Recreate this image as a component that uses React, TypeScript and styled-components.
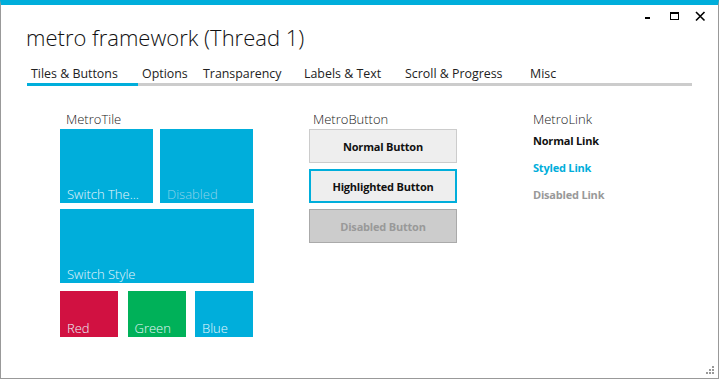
import styled, { createGlobalStyle } from 'styled-components';

const metroBlue = '#00aedb';

const GlobalStyle = createGlobalStyle`
	html, body {
		margin: 0;
		padding: 0;
		background: #ffffff;
	}

	body {
		font-family: 'Open Sans', 'Noto Sans', sans-serif;
		color: #111111;
	}
`;

const Window = styled.div`
	box-sizing: border-box;
	width: 719px;
	height: 379px;
	border: 1px solid #999999;
	border-top: 5px solid ${metroBlue};
	display: flex;
	flex-direction: column;
	position: relative;
	overflow: hidden;
`;

const TitleBar = styled.div`
	display: flex;
	justify-content: space-between;
	align-items: flex-start;
`;

const Title = styled.h1`
	margin: 16px 0 0 25px;
	font-size: 22px;
	font-weight: 300;
	line-height: 32px;
	color: #111111;
	letter-spacing: 0;
`;

const Controls = styled.div`
	display: flex;
	align-items: flex-start;
	gap: 15px;
	padding: 6px 12px 0 0;
`;

const ControlButton = styled.button`
	border: 0;
	background: none;
	padding: 0;
	width: 11px;
	height: 11px;
	display: flex;
	align-items: center;
	justify-content: center;
	cursor: pointer;
`;

const TabStrip = styled.div`
	display: flex;
	margin: 12px 0 0 26px;
	width: 665px;
	border-bottom: 3px solid #cccccc;
`;

const Tab = styled.div<{ $width: number; $active?: boolean }>`
	box-sizing: border-box;
	width: ${(props) => props.$width}px;
	padding: 0 0 0 4px;
	font-size: 12.4px;
	line-height: 18px;
	color: #222222;
	white-space: nowrap;
	margin-bottom: -3px;
	border-bottom: 3px solid ${(props) => (props.$active ? metroBlue : 'transparent')};
`;

const Panel = styled.div`
	display: grid;
	grid-template-columns: 249px 224px 1fr;
	padding: 24px 0 0 59px;
`;

const Column = styled.div`
	display: flex;
	flex-direction: column;
`;

const GroupLabel = styled.div<{ $indent: number }>`
	font-size: 13px;
	font-weight: 300;
	line-height: 18px;
	color: #222222;
	padding-left: ${(props) => props.$indent}px;
	margin-bottom: 1px;
`;

const TileRow = styled.div<{ $gap: number; $width: number }>`
	display: flex;
	justify-content: space-between;
	width: ${(props) => props.$width}px;
	margin-bottom: ${(props) => props.$gap}px;
`;

const Tile = styled.div<{ $width: number; $height: number; $colour: string; $disabled?: boolean }>`
	box-sizing: border-box;
	width: ${(props) => props.$width}px;
	height: ${(props) => props.$height}px;
	background: ${(props) => props.$colour};
	display: flex;
	align-items: flex-end;
	padding: 0 0 0 7px;
	font-size: 13px;
	font-weight: 300;
	line-height: 17px;
	color: ${(props) => (props.$disabled ? '#8fd3ea' : '#e8f6fb')};
	white-space: nowrap;
`;

const ButtonStack = styled.div`
	display: flex;
	flex-direction: column;
	gap: 6px;
`;

const MetroButton = styled.button<{ $variant?: 'highlight' | 'disabled' }>`
	box-sizing: border-box;
	width: 148px;
	height: 34px;
	font-family: 'Open Sans', 'Noto Sans', sans-serif;
	font-size: 11px;
	font-weight: 700;
	letter-spacing: -0.2px;
	background: ${(props) => (props.$variant === 'disabled' ? '#cccccc' : '#eeeeee')};
	color: ${(props) => (props.$variant === 'disabled' ? '#999999' : '#111111')};
	border: ${(props) =>
		props.$variant === 'highlight'
			? `2px solid ${metroBlue}`
			: props.$variant === 'disabled'
				? '1px solid #aaaaaa'
				: '1px solid #cccccc'};
	padding: 0;
	cursor: pointer;
`;

const LinkStack = styled.div`
	display: flex;
	flex-direction: column;
	gap: 9px;
	padding-top: 3px;
`;

const MetroLink = styled.a<{ $colour: string }>`
	font-size: 11px;
	font-weight: 700;
	letter-spacing: -0.2px;
	line-height: 18px;
	color: ${(props) => props.$colour};
	text-decoration: none;
	cursor: pointer;
`;

const Grip = styled.svg`
	position: absolute;
	right: 3px;
	bottom: 3px;
`;

const tabs = [
	{ title: 'Tiles & Buttons', width: 111 },
	{ title: 'Options', width: 61 },
	{ title: 'Transparency', width: 101 },
	{ title: 'Labels & Text', width: 101 },
	{ title: 'Scroll & Progress', width: 125 },
	{ title: 'Misc', width: 60 }
];

const App = () => {
	return (
		<>
			<GlobalStyle />
			<Window>
				<TitleBar>
					<Title>metro framework (Thread 1)</Title>
					<Controls>
						<ControlButton aria-label="Minimize">
							<svg width="11" height="11" viewBox="0 0 11 11">
								<rect x="2" y="6" width="5" height="2" fill="#000" />
							</svg>
						</ControlButton>
						<ControlButton aria-label="Maximize">
							<svg width="11" height="11" viewBox="0 0 11 11">
								<rect x="1.5" y="1.5" width="8" height="7" fill="none" stroke="#000" strokeWidth="1" />
								<rect x="1" y="1" width="9" height="2" fill="#000" />
							</svg>
						</ControlButton>
						<ControlButton aria-label="Close">
							<svg width="11" height="11" viewBox="0 0 11 11">
								<path d="M1 1 L9.5 9.5 M9.5 1 L1 9.5" stroke="#000" strokeWidth="1.6" />
							</svg>
						</ControlButton>
					</Controls>
				</TitleBar>

				<TabStrip>
					{tabs.map((tab, i) => (
						<Tab key={tab.title} $width={tab.width} $active={i === 0}>
							{tab.title}
						</Tab>
					))}
				</TabStrip>

				<Panel>
					<Column>
						<GroupLabel $indent={6}>MetroTile</GroupLabel>
						<TileRow $gap={6} $width={193}>
							<Tile $width={93} $height={74} $colour={metroBlue}>Switch The...</Tile>
							<Tile $width={93} $height={74} $colour={metroBlue} $disabled>Disabled</Tile>
						</TileRow>
						<TileRow $gap={8} $width={194}>
							<Tile $width={194} $height={74} $colour={metroBlue}>Switch Style</Tile>
						</TileRow>
						<TileRow $gap={0} $width={193}>
							<Tile $width={58} $height={46} $colour="#d11141">Red</Tile>
							<Tile $width={58} $height={46} $colour="#00b159">Green</Tile>
							<Tile $width={58} $height={46} $colour={metroBlue}>Blue</Tile>
						</TileRow>
					</Column>

					<Column>
						<GroupLabel $indent={4}>MetroButton</GroupLabel>
						<ButtonStack>
							<MetroButton>Normal Button</MetroButton>
							<MetroButton $variant="highlight">Highlighted Button</MetroButton>
							<MetroButton $variant="disabled" disabled>Disabled Button</MetroButton>
						</ButtonStack>
					</Column>

					<Column>
						<GroupLabel $indent={0}>MetroLink</GroupLabel>
						<LinkStack>
							<MetroLink $colour="#111111">Normal Link</MetroLink>
							<MetroLink $colour={metroBlue}>Styled Link</MetroLink>
							<MetroLink $colour="#999999">Disabled Link</MetroLink>
						</LinkStack>
					</Column>
				</Panel>

				<Grip width="10" height="10" viewBox="0 0 10 10">
					<rect x="7" y="1" width="2" height="2" fill="#999" />
					<rect x="4" y="4" width="2" height="2" fill="#999" />
					<rect x="7" y="4" width="2" height="2" fill="#999" />
					<rect x="1" y="7" width="2" height="2" fill="#999" />
					<rect x="4" y="7" width="2" height="2" fill="#999" />
					<rect x="7" y="7" width="2" height="2" fill="#999" />
				</Grip>
			</Window>
		</>
	);
};

export default App;
